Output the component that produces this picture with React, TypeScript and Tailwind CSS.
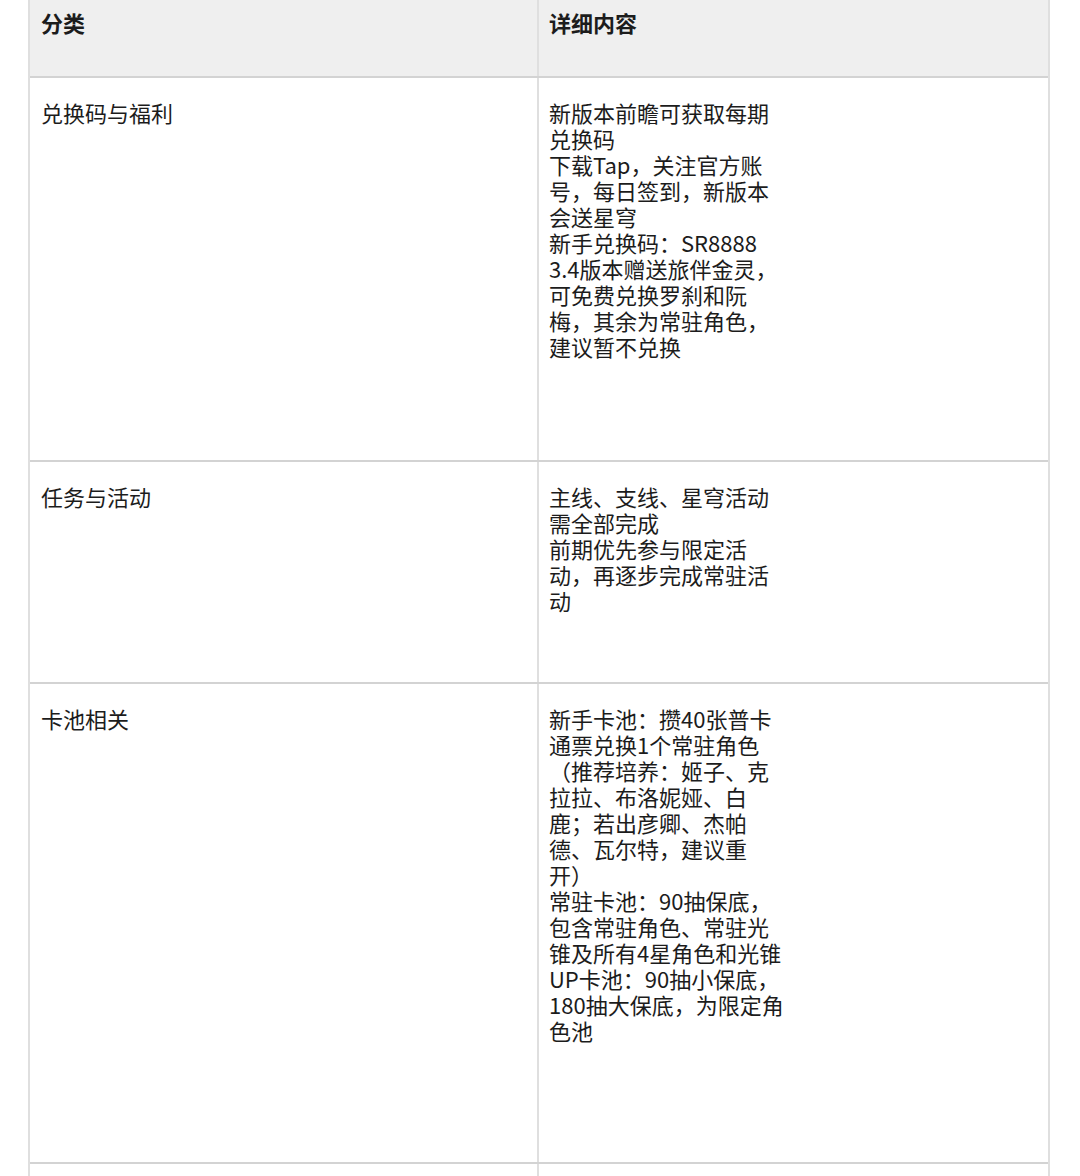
import React from "react";

const font = { fontFamily: '"Noto Sans CJK SC", "Noto Sans", sans-serif' };

type Row = { cat: string; lines: string[]; h: string };

const rows: Row[] = [
  {
    cat: "兑换码与福利",
    h: "h-[384px]",
    lines: [
      "新版本前瞻可获取每期兑换码",
      "下载Tap，关注官方账号，每日签到，新版本会送星穹",
      "新手兑换码：SR8888",
      "3.4版本赠送旅伴金灵，可免费兑换罗刹和阮梅，其余为常驻角色，建议暂不兑换",
    ],
  },
  {
    cat: "任务与活动",
    h: "h-[222px]",
    lines: ["主线、支线、星穹活动需全部完成", "前期优先参与限定活动，再逐步完成常驻活动"],
  },
  {
    cat: "卡池相关",
    h: "h-[480px]",
    lines: [
      "新手卡池：攒40张普卡通票兑换1个常驻角色（推荐培养：姬子、克拉拉、布洛妮娅、白鹿；若出彦卿、杰帕德、瓦尔特，建议重开）",
      "常驻卡池：90抽保底，包含常驻角色、常驻光锥及所有4星角色和光锥",
      "UP卡池：90抽小保底，180抽大保底，为限定角色池",
    ],
  },
];

export default function App() {
  return (
    <div className="w-[1080px] h-[1176px] overflow-hidden bg-white" style={font}>
      <div className="ml-[28px] w-[1022px] border-l-2 border-r-2 border-[#dfdfdf] text-[22px] leading-[26px] text-[#1c1c1c] [text-spacing-trim:space-all]">
        <div className="flex h-[78px] bg-[#efefef] border-b-2 border-[#d3d3d3]">
          <div className="w-[509px] border-r-2 border-[#dfdfdf] pl-[11px] pt-[9px] font-bold">分类</div>
          <div className="flex-1 pl-[10px] pt-[9px] font-bold">详细内容</div>
        </div>
        {rows.map((r) => (
          <div key={r.cat} className={`flex ${r.h} border-b-2 border-[#d3d3d3]`}>
            <div className="w-[509px] border-r-2 border-[#dfdfdf] pl-[11px] pt-[21px]">
              <div className="w-[236px]">{r.cat}</div>
            </div>
            <div className="flex-1 pl-[10px] pt-[21px]">
              <div className="w-[238px]">
                {r.lines.map((l, i) => (
                  <div key={i}>{l}</div>
                ))}
              </div>
            </div>
          </div>
        ))}
        <div className="flex h-[60px]">
          <div className="w-[509px] border-r-2 border-[#dfdfdf]"></div>
          <div className="flex-1"></div>
        </div>
      </div>
    </div>
  );
}
